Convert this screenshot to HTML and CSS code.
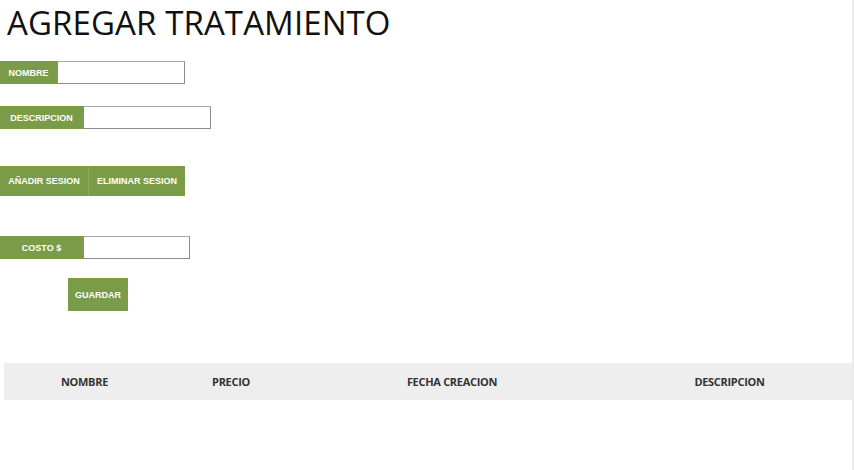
FILE: index.html
```html
<!DOCTYPE html>
<html lang="es">
<head>
<meta charset="utf-8">
<title>Agregar tratamiento</title>
<link rel="stylesheet" href="styles.css">
</head>
<body>
<div class="page">
  <h1 class="title">AGREGAR TRATAMIENTO</h1>
  <form class="form">
    <div class="field field-nombre">
      <span class="tag tag-nombre">NOMBRE</span>
      <input class="input input-nombre" type="text">
    </div>
    <div class="field field-desc">
      <span class="tag tag-desc">DESCRIPCION</span>
      <input class="input input-desc" type="text">
    </div>
    <div class="btn-group">
      <button type="button" class="btn btn-add">AÑADIR SESION</button>
      <button type="button" class="btn btn-del">ELIMINAR SESION</button>
    </div>
    <div class="field field-costo">
      <span class="tag tag-costo">COSTO $</span>
      <input class="input input-costo" type="text">
    </div>
    <button type="button" class="btn btn-save">GUARDAR</button>
  </form>
  <div class="table-head">
    <div class="th">NOMBRE</div>
    <div class="th">PRECIO</div>
    <div class="th">FECHA CREACION</div>
    <div class="th">DESCRIPCION</div>
  </div>
</div>
</body>
</html>
```

FILE: styles.css
```css
html, body {
  margin: 0;
  padding: 0;
  background: #ffffff;
}
body {
  width: 854px;
  height: 470px;
  overflow: hidden;
}
.page {
  width: 852px;
  height: 470px;
  border-right: 2px solid #ececec;
  background: #ffffff;
}
.title {
  margin: 0;
  padding: 1px 0 0 7px;
  font-family: "Open Sans", sans-serif;
  font-weight: 400;
  font-size: 33px;
  line-height: 43px;
  color: #111111;
  letter-spacing: 0.1px;
}
.form {
  display: flex;
  flex-direction: column;
  align-items: flex-start;
  margin: 0;
}
.field {
  display: flex;
  height: 23px;
}
.field-nombre { margin-top: 17px; }
.field-desc { margin-top: 22px; }
.field-costo { margin-top: 40px; }
.tag {
  display: flex;
  align-items: center;
  justify-content: center;
  background: #7a9c48;
  color: #ffffff;
  font-family: "Liberation Sans", Arial, sans-serif;
  font-weight: 700;
  font-size: 9px;
  height: 23px;
  box-sizing: border-box;
}
.tag-nombre { width: 57px; }
.tag-desc { width: 83px; }
.tag-costo { width: 83px; }
.input {
  box-sizing: border-box;
  height: 23px;
  margin: 0;
  padding: 0 4px;
  border: 1px solid #8c8c8c;
  border-top-color: #a8a8a8;
  background: #ffffff;
  outline: none;
}
.input-nombre { width: 128px; }
.input-desc { width: 128px; }
.input-costo { width: 107px; }
.btn-group {
  display: flex;
  margin-top: 37px;
}
.btn {
  margin: 0;
  border: none;
  background: #7a9c48;
  color: #ffffff;
  font-family: "Liberation Sans", Arial, sans-serif;
  font-weight: 700;
  font-size: 9px;
  cursor: pointer;
  padding: 0;
}
.btn-add {
  width: 88px;
  height: 30px;
}
.btn-del {
  width: 97px;
  height: 30px;
  border-left: 1px solid #8bab5c;
}
.btn-save {
  width: 60px;
  height: 33px;
  margin-top: 19px;
  margin-left: 68px;
}
.table-head {
  display: grid;
  grid-template-columns: 161px 132px 310px 245px;
  align-items: center;
  height: 37px;
  margin-top: 52px;
  margin-left: 4px;
  width: 848px;
  background: #eeeeee;
}
.th {
  text-align: center;
  font-family: "Open Sans", sans-serif;
  font-weight: 700;
  font-size: 11px;
  color: #333333;
  letter-spacing: -0.3px;
}
```
